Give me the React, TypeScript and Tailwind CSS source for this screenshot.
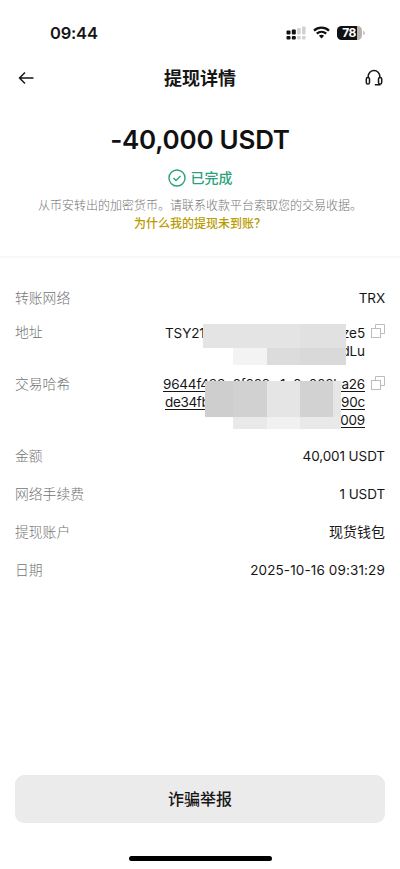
import type { ReactNode } from "react";

const FONT = "font-['Inter','Noto_Sans_CJK_SC',sans-serif]";

function StatusBar() {
  return (
    <div className="flex h-[54px] items-start justify-between pl-[50px] pr-[35px] pt-[23px]">
      <span className="text-[16.5px] font-semibold leading-[20px] tracking-[-0.2px] text-[#161616]">09:44</span>
      <div className="flex h-[19px] items-center">
        <svg width="20" height="14" viewBox="0 0 20 14" className="mr-[7px]">
          <g fill="#111">
            <rect x="0.5" y="4.5" width="4" height="4" rx="1" />
            <rect x="5.8" y="3.5" width="4" height="5" rx="1" />
            <rect x="0.5" y="10" width="4" height="3.5" rx="1" />
            <rect x="5.8" y="10" width="4" height="3.5" rx="1" />
          </g>
          <g fill="#d2d2d2">
            <rect x="11.1" y="2" width="3.6" height="6.5" rx="1" />
            <rect x="16" y="0.5" width="3.6" height="8" rx="1" />
            <rect x="11.1" y="10" width="3.6" height="3.5" rx="1" />
            <rect x="16" y="10" width="3.6" height="3.5" rx="1" />
          </g>
        </svg>
        <svg width="17" height="13" viewBox="0 0 17 13" className="mr-[7px]" fill="none" stroke="#111" strokeWidth="2.3">
          <path d="M1 4.7C5.2 0.7 11.8 0.7 16 4.7" />
          <path d="M3.8 7.7C6.5 5.2 10.5 5.2 13.2 7.7" />
          <path d="M5.9 9.7C7.4 8.4 9.6 8.4 11.1 9.7L8.5 12.4Z" fill="#111" stroke="none" />
        </svg>
        <div className="flex h-[14px] w-[25px] items-center justify-center rounded-[4.5px] bg-linear-to-r from-[#111] from-80% to-[#b5b5b5] to-80% pr-px text-[12px] font-bold leading-none tracking-[-0.5px] text-white">
          78
        </div>
        <div className="ml-px h-[4px] w-[2px] rounded-r-full bg-[#c4c4c4]" />
      </div>
    </div>
  );
}

function Header() {
  return (
    <header className="flex h-[48px] items-center justify-between px-[17px]">
      <svg width="16" height="14" viewBox="0 0 16 14" fill="none" stroke="#161616" strokeWidth="1.5" className="ml-px">
        <path d="M15.5 7H1.5M7 1.5L1.5 7L7 12.5" />
      </svg>
      <h1 className="pl-px pt-px text-[18px] font-bold leading-[24px] text-[#161616]">提现详情</h1>
      <svg width="18" height="18" viewBox="0 0 18 18" fill="none" stroke="#161616" strokeWidth="1.5">
        <path d="M3.2 8.7V7.3A5.8 5.8 0 0 1 14.8 7.3V8.7" />
        <rect x="1.3" y="8.5" width="3.2" height="6.6" rx="1.6" />
        <rect x="13.5" y="8.5" width="3.2" height="6.6" rx="1.6" />
        <path d="M14.7 15V15.8H9.8" />
      </svg>
    </header>
  );
}

function CopyIcon() {
  return (
    <svg width="14" height="14" viewBox="0 0 14 14" fill="none" stroke="#bcbcbc" strokeWidth="1" className="ml-[6px] mt-px shrink-0">
      <rect x="0.5" y="4.5" width="9" height="9" />
      <path d="M4.5 4.5V0.5H13.5V9.5H9.5" />
    </svg>
  );
}

function Row({ label, className, children }: { label: string; className: string; children: ReactNode }) {
  return (
    <div className={`flex items-start justify-between ${className}`}>
      <span className="text-[13.8px] font-light leading-[18px] text-[#747474]">{label}</span>
      {children}
    </div>
  );
}

function Value({ className = "text-[13.5px] tracking-[-0.1px]", children }: { className?: string; children: ReactNode }) {
  return <span className={`leading-[18px] text-[#161616] ${className}`}>{children}</span>;
}

export default function App() {
  return (
    <div className={`flex h-[869px] w-[400px] flex-col overflow-hidden bg-white ${FONT}`}>
      <StatusBar />
      <Header />

      <section className="flex h-[156px] shrink-0 flex-col items-center border-b-2 border-[#f7f7f7] pt-[22px]">
        <div className="text-[26px] font-semibold leading-[32px] tracking-[-0.25px] text-[#111]">-40,000 USDT</div>
        <div className="mt-[12px] flex h-[20px] items-center gap-[5px] text-[14px] font-medium leading-[20px] text-[#2ba27b]">
          <svg width="18" height="18" viewBox="0 0 18 18" fill="none" stroke="currentColor" strokeWidth="1.4">
            <circle cx="9" cy="9" r="8" />
            <path d="M5.5 9L8 11.5L12.5 7" />
          </svg>
          已完成
        </div>
        <p className="mt-[9px] text-[12px] font-light leading-[18px] text-[#747474]">从币安转出的加密货币。请联系收款平台索取您的交易收据。</p>
        <p className="text-[12px] font-medium leading-[18px] text-[#b89b00]">为什么我的提现未到账？</p>
      </section>

      <section className="flex-1 px-[15px] pt-[31px]">
        <Row label="转账网络" className="h-[34px]">
          <Value>TRX</Value>
        </Row>
        <Row label="地址" className="h-[52px]">
          <div className="relative flex">
            <div className="w-[200px] pt-px text-[13.5px] leading-[18px] tracking-[-0.1px] text-[#161616]">
              <div className="flex justify-between"><span>TSY21</span><span>ze5</span></div>
              <div className="text-right">dLu</div>
            </div>
            <CopyIcon />
            {/* Privacy mosaic over the address */}
            <div className="absolute left-[38px] top-px flex h-[24px] w-[143px]">
              <i className="w-[97px] bg-[#e4e4e4]" />
              <i className="flex-1 bg-[#e1e1e1]" />
            </div>
            <div className="absolute left-[68px] top-[25px] flex h-[17px] w-[113px]">
              <i className="w-[34px] bg-[#f3f3f3]" />
              <i className="w-[33px] bg-[#dcdcdc]" />
              <i className="flex-1 bg-[#d9d9d9]" />
            </div>
          </div>
        </Row>
        <Row label="交易哈希" className="h-[72px]">
          <div className="relative flex">
            <div className="w-[202px] text-[13.5px] leading-[18px] tracking-[-0.2px] text-[#161616] underline underline-offset-2">
              <div className="flex justify-between"><span>9644f433c2f029</span><span>c1e0c022ba26</span></div>
              <div className="flex justify-between pl-[2px]"><span className="tracking-[-0.35px]">de34fb</span><span>90c</span></div>
              <div className="text-right">009</div>
            </div>
            <CopyIcon />
            {/* Privacy mosaic over the hash */}
            <div className="absolute left-[42px] top-[6px] flex h-[36px] w-[136px]">
              <i className="w-[28px] bg-[#cecece]" />
              <i className="w-[34px] bg-[#d1d1d1]" />
              <i className="w-[33px] bg-[#e5e5e5]" />
              <i className="w-[33px] bg-[#d2d2d2]" />
              <i className="flex-1 bg-[#e6e6e6]" />
            </div>
            <div className="absolute left-[70px] top-[42px] flex h-[12px] w-[108px]">
              <i className="w-[34px] bg-[#e9e9e9]" />
              <i className="w-[33px] bg-[#f1f1f1]" />
              <i className="flex-1 bg-[#e9e9e9]" />
            </div>
          </div>
        </Row>
        <Row label="金额" className="h-[38px]">
          <Value>40,001 USDT</Value>
        </Row>
        <Row label="网络手续费" className="h-[38px]">
          <Value>1 USDT</Value>
        </Row>
        <Row label="提现账户" className="h-[38px]">
          <Value className="text-[14px]">现货钱包</Value>
        </Row>
        <Row label="日期" className="h-[38px]">
          <Value className="text-[13.5px] tracking-[0.13px]">2025-10-16 09:31:29</Value>
        </Row>
      </section>

      <footer className="flex shrink-0 flex-col items-center px-[15px] pb-[8px]">
        <button className="h-[48px] w-full rounded-[9px] bg-[#ebebeb] text-[16px] font-medium text-[#161616]">诈骗举报</button>
        <div className="mt-[33px] h-[5px] w-[143px] rounded-full bg-black" />
      </footer>
    </div>
  );
}
